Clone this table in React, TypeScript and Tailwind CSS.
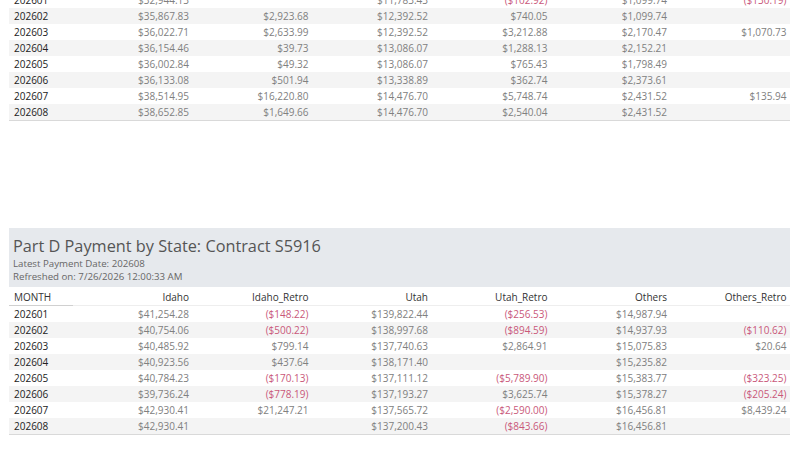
import React from "react";

type Row = [string, string, string, string, string, string, string];

const top: Row[] = [
  ["202601", "$32,944.13", "", "$11,783.43", "($102.92)", "$1,099.74", "($130.19)"],
  ["202602", "$35,867.83", "$2,923.68", "$12,392.52", "$740.05", "$1,099.74", ""],
  ["202603", "$36,022.71", "$2,633.99", "$12,392.52", "$3,212.88", "$2,170.47", "$1,070.73"],
  ["202604", "$36,154.46", "$39.73", "$13,086.07", "$1,288.13", "$2,152.21", ""],
  ["202605", "$36,002.84", "$49.32", "$13,086.07", "$765.43", "$1,798.49", ""],
  ["202606", "$36,133.08", "$501.94", "$13,338.89", "$362.74", "$2,373.61", ""],
  ["202607", "$38,514.95", "$16,220.80", "$14,476.70", "$5,748.74", "$2,431.52", "$135.94"],
  ["202608", "$38,652.85", "$1,649.66", "$14,476.70", "$2,540.04", "$2,431.52", ""],
];

const bottom: Row[] = [
  ["202601", "$41,254.28", "($148.22)", "$139,822.44", "($256.53)", "$14,987.94", ""],
  ["202602", "$40,754.06", "($500.22)", "$138,997.68", "($894.59)", "$14,937.93", "($110.62)"],
  ["202603", "$40,485.92", "$799.14", "$137,740.63", "$2,864.91", "$15,075.83", "$20.64"],
  ["202604", "$40,923.56", "$437.64", "$138,171.40", "", "$15,235.82", ""],
  ["202605", "$40,784.23", "($170.13)", "$137,111.12", "($5,789.90)", "$15,383.77", "($323.25)"],
  ["202606", "$39,736.24", "($778.19)", "$137,193.27", "$3,625.74", "$15,378.27", "($205.24)"],
  ["202607", "$42,930.41", "$21,247.21", "$137,565.72", "($2,590.00)", "$16,456.81", "$8,439.24"],
  ["202608", "$42,930.41", "", "$137,200.43", "($843.66)", "$16,456.81", ""],
];

const headers = ["Idaho", "Idaho_Retro", "Utah", "Utah_Retro", "Others", "Others_Retro"];

function Rows({ rows }: { rows: Row[] }) {
  return (
    <div className="border-b border-[#d9d9d9]">
      {rows.map((r, i) => (
        <div
          key={r[0]}
          className={`grid grid-cols-[64px_repeat(6,119.5px)] h-[16px] items-center ${
            i % 2 === 1 ? "bg-[#f4f4f4]" : "bg-white"
          }`}
        >
          <div className="pl-[5px] text-[#222] font-medium">{r[0]}</div>
          {r.slice(1).map((v, j) => (
            <div
              key={j}
              className={`text-right pr-[3.5px] ${v.startsWith("(") ? "text-[#c9587a]" : "text-[#808080]"}`}
            >
              {v}
            </div>
          ))}
        </div>
      ))}
    </div>
  );
}

export default function App() {
  return (
    <div
      className="w-[800px] h-[450px] overflow-hidden bg-white text-[10px] leading-none"
      style={{ fontFamily: '"Open Sans", sans-serif' }}
    >
      <div className="ml-[9px] w-[781px] -mt-[8px]">
        <Rows rows={top} />
      </div>
      <div className="ml-[9px] w-[781px] mt-[107px]">
        <div className="bg-[#e6e9ed] h-[59px] pl-[4px] pt-[8px]">
          <div className="text-[16.3px] leading-[20px] text-[#555]">
            Part D Payment by State: Contract S5916
          </div>
          <div className="text-[9.7px] leading-[13px] text-[#666] mt-[1px]">Latest Payment Date: 202608</div>
          <div className="text-[9.7px] leading-[13px] text-[#666]">Refreshed on: 7/26/2026 12:00:33 AM</div>
        </div>
        <div className="grid grid-cols-[64px_repeat(6,119.5px)] h-[19px] items-end pb-[3px] border-b border-[#eeeeee]">
          <div className="pl-[5px] text-[#333] h-[19px] flex items-end pb-[3px] -mb-[4px] border-b border-[#d0d0d0]">
            MONTH
          </div>
          {headers.map((h) => (
            <div key={h} className="text-right pr-[3.5px] text-[#333]">
              {h}
            </div>
          ))}
        </div>
        <Rows rows={bottom} />
      </div>
    </div>
  );
}
